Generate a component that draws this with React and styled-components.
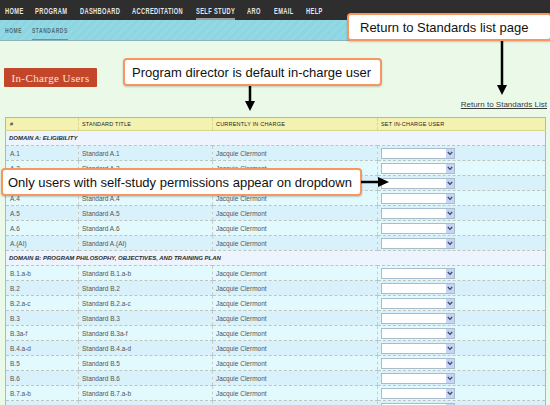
import React from "react";
import styled, { createGlobalStyle } from "styled-components";

const GlobalStyle = createGlobalStyle`
  html, body {
    margin: 0;
    padding: 0;
    background: #ebf9e9;
    font-family: "Liberation Sans", Arial, sans-serif;
  }
`;

// label + slot width, the nav font is a narrow gothic so labels are squeezed
const navItems = [
  ["HOME", 30],
  ["PROGRAM", 45],
  ["DASHBOARD", 52],
  ["ACCREDITATION", 64],
  ["SELF STUDY", 51],
  ["ARO", 27],
  ["EMAIL", 32],
  ["HELP", 24],
];

const domains = [
  {
    title: "DOMAIN A: ELIGIBILITY",
    rows: [
      ["A.1", "Standard A.1"],
      ["A.2", "Standard A.2"],
      ["A.3", "Standard A.3"],
      ["A.4", "Standard A.4"],
      ["A.5", "Standard A.5"],
      ["A.6", "Standard A.6"],
      ["A.(AI)", "Standard A.(AI)"],
    ],
  },
  {
    title: "DOMAIN B: PROGRAM PHILOSOPHY, OBJECTIVES, AND TRAINING PLAN",
    rows: [
      ["B.1.a-b", "Standard B.1.a-b"],
      ["B.2", "Standard B.2"],
      ["B.2.a-c", "Standard B.2.a-c"],
      ["B.3", "Standard B.3"],
      ["B.3a-f", "Standard B.3a-f"],
      ["B.4.a-d", "Standard B.4.a-d"],
      ["B.5", "Standard B.5"],
      ["B.6", "Standard B.6"],
      ["B.7.a-b", "Standard B.7.a-b"],
      ["B.7(MI-A)", "Standard B.7(MI-A)"],
    ],
  },
];

const Page = styled.div`
  position: relative;
  width: 550px;
  height: 405px;
  overflow: hidden;
`;

const TopNav = styled.nav`
  height: 20px;
  background: #2e2e2e;
  display: flex;
  align-items: stretch;
  padding-left: 5px;
`;

const NavItem = styled.span`
  width: ${(p) => p.$w}px;
  flex: none;
  display: flex;
  align-items: stretch;
`;

const NavLabel = styled.span`
  display: flex;
  align-items: center;
  white-space: nowrap;
  font-weight: bold;
  font-size: 9.5px;
  letter-spacing: 0.6px;
  color: #e6e6e6;
  transform: scaleX(0.6);
  transform-origin: left center;
  border-bottom: 2px solid ${(p) => (p.$active ? "#9a9a9a" : "transparent")};
  box-sizing: border-box;
  padding-top: 2px;
`;

const SubNav = styled.nav`
  height: 20px;
  background: repeating-linear-gradient(135deg, #8dd5e1 0 3px, #93d9e4 3px 6px);
  border-bottom: 1px solid #8fb2b6;
  display: flex;
  padding-left: 5px;
`;

const SubItem = styled.span`
  width: ${(p) => p.$w}px;
  flex: none;
  display: flex;
  align-items: stretch;
`;

const SubLabel = styled.span`
  display: flex;
  align-items: center;
  white-space: nowrap;
  font-weight: bold;
  font-size: 8px;
  letter-spacing: 0.9px;
  color: #4f6e74;
  transform: scaleX(0.62);
  transform-origin: left center;
  border-bottom: 1px solid ${(p) => (p.$active ? "#7a8e90" : "transparent")};
  box-sizing: border-box;
  padding-top: 1px;
`;

const Main = styled.main`
  padding: 27px 5px 0 4px;
`;

const ChargeButton = styled.div`
  width: 93px;
  height: 19px;
  background: #c4462a;
  border-radius: 1px;
  color: #f4e4d4;
  font-family: "Liberation Serif", serif;
  font-size: 11px;
  letter-spacing: 0.4px;
  display: flex;
  align-items: center;
  justify-content: center;
`;

const LinkRow = styled.div`
  display: flex;
  justify-content: flex-end;
  margin-top: 13px;
  height: 11px;
  margin-right: -2px;
`;

const BackLink = styled.a`
  font-size: 8px;
  color: #3a3a3a;
  text-decoration: underline;
`;

const Table = styled.table`
  margin-top: 6px;
  margin-left: 1px;
  width: 540px;
  border-collapse: collapse;
  table-layout: fixed;
  border: 1px solid #b4b8b0;
  font-size: 6.5px;
  color: #555;
`;

const HeadCell = styled.th`
  height: 12px;
  background: #f4f2b0;
  border-bottom: 1px solid #d8d68e;
  border-left: 1px dashed #d8d68e;
  font-weight: normal;
  font-size: 5.5px;
  letter-spacing: 0.2px;
  color: #222;
  text-align: left;
  padding: 0 0 0 3px;
  &:first-child {
    border-left: none;
    padding-left: 4px;
  }
`;

const DomainCell = styled.td`
  height: 14px;
  background: #eef4fd;
  font-weight: bold;
  font-style: italic;
  font-size: 6px;
  color: #2a2a2a;
  padding: 0 0 0 3px;
  border-bottom: 1px dashed #b9c4cc;
`;

const Row = styled.tr`
  background: ${(p) => (p.$alt ? "#e2f9fe" : "#d9f1fb")};
`;

const Cell = styled.td`
  height: 14px;
  padding: 0 0 0 3px;
  border-bottom: 1px dashed #b9c4cc;
  border-left: 1px dashed #c3ced4;
  white-space: nowrap;
  overflow: hidden;
  &:first-child {
    border-left: none;
    padding-left: 4px;
  }
`;

const Select = styled.div`
  width: 72px;
  height: 9px;
  border: 1px solid #a9bccb;
  background: #fff;
  display: flex;
  justify-content: flex-end;
`;

const SelectArrow = styled.span`
  width: 8px;
  height: 9px;
  background: #c7d4f3;
  display: flex;
  align-items: center;
  justify-content: center;
`;

const Callout = styled.div`
  position: absolute;
  left: ${(p) => p.$x}px;
  top: ${(p) => p.$y}px;
  width: ${(p) => p.$w}px;
  height: ${(p) => p.$h}px;
  box-sizing: border-box;
  background: #fff;
  border: 2px solid #f7965e;
  border-radius: 4px;
  box-shadow: 0 1px 2px rgba(0, 0, 0, 0.2);
  font-family: "Liberation Sans", Arial, sans-serif;
  font-size: 13px;
  color: #111;
  display: flex;
  align-items: center;
  padding-left: ${(p) => p.$pad}px;
  white-space: nowrap;
`;

const ArrowSvg = styled.svg`
  position: absolute;
  left: ${(p) => p.$x}px;
  top: ${(p) => p.$y}px;
`;

const Chevron = () => (
  <svg width="6" height="5" viewBox="0 0 6 5">
    <path d="M0.8 1 L3 3.4 L5.2 1" fill="none" stroke="#34456a" strokeWidth="1.2" />
  </svg>
);

const DownArrow = ({ x, y, len }) => (
  <ArrowSvg $x={x - 6} $y={y} width="12" height={len}>
    <line x1="6" y1="0" x2="6" y2={len - 8} stroke="#000" strokeWidth="2.5" />
    <polygon points={`1,${len - 10} 11,${len - 10} 6,${len}`} fill="#000" />
  </ArrowSvg>
);

const RightArrow = ({ x, y, len }) => (
  <ArrowSvg $x={x} $y={y - 6} width={len} height="12">
    <line x1="0" y1="6" x2={len - 8} y2="6" stroke="#000" strokeWidth="2.5" />
    <polygon points={`${len - 11},1 ${len - 11},11 ${len},6`} fill="#000" />
  </ArrowSvg>
);

export default function App() {
  let n = 0;
  return (
    <Page>
      <GlobalStyle />
      <TopNav>
        {navItems.map(([item, w]) => (
          <NavItem key={item} $w={w}>
            <NavLabel $active={item === "SELF STUDY"}>{item}</NavLabel>
          </NavItem>
        ))}
      </TopNav>
      <SubNav>
        <SubItem $w={27}>
          <SubLabel>HOME</SubLabel>
        </SubItem>
        <SubItem $w={60}>
          <SubLabel $active>STANDARDS</SubLabel>
        </SubItem>
      </SubNav>
      <Main>
        <ChargeButton>In-Charge Users</ChargeButton>
        <LinkRow>
          <BackLink>Return to Standards List</BackLink>
        </LinkRow>
        <Table>
          <colgroup>
            <col style={{ width: 73 }} />
            <col style={{ width: 134 }} />
            <col style={{ width: 165 }} />
            <col style={{ width: 168 }} />
          </colgroup>
          <thead>
            <tr>
              <HeadCell>#</HeadCell>
              <HeadCell>STANDARD TITLE</HeadCell>
              <HeadCell>CURRENTLY IN CHARGE</HeadCell>
              <HeadCell>SET IN-CHARGE USER</HeadCell>
            </tr>
          </thead>
          <tbody>
            {domains.map((d) => (
              <React.Fragment key={d.title}>
                <tr>
                  <DomainCell colSpan={4}>{d.title}</DomainCell>
                </tr>
                {d.rows.map(([code, title]) => {
                  n += 1;
                  return (
                    <Row key={code} $alt={n % 2 === 0}>
                      <Cell>{code}</Cell>
                      <Cell>{title}</Cell>
                      <Cell>Jacquie Clermont</Cell>
                      <Cell>
                        <Select>
                          <SelectArrow>
                            <Chevron />
                          </SelectArrow>
                        </Select>
                      </Cell>
                    </Row>
                  );
                })}
              </React.Fragment>
            ))}
          </tbody>
        </Table>
      </Main>

      <Callout $x={347} $y={13} $w={205} $h={28} $pad={11}>
        Return to Standards list page
      </Callout>
      <DownArrow x={502} y={41} len={54} />

      <Callout $x={123} $y={58} $w={259} $h={28} $pad={7}>
        Program director is default in-charge user
      </Callout>
      <DownArrow x={250} y={86} len={25} />

      <Callout $x={1} $y={168} $w={361} $h={28} $pad={5}>
        Only users with self-study permissions appear on dropdown
      </Callout>
      <RightArrow x={361} y={182} len={28} />
    </Page>
  );
}
